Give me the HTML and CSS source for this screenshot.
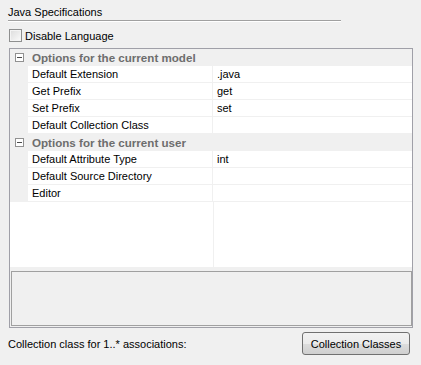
FILE: index.html
```html
<!DOCTYPE html>
<html lang="en">
<head>
    <meta charset="UTF-8">
    <title>Java Specifications</title>
    <link rel="stylesheet" href="styles.css">
</head>
<body>

<div class="panel">
    <div class="section-title">Java Specifications</div>
    <div class="rule"></div>

    <label class="check-row">
        <span class="checkbox"></span>
        <span>Disable Language</span>
    </label>

    <div class="grid-frame">
        <div class="grid">
            <div class="category">
                <span class="toggle"></span>
                <span class="category-name">Options for the current model</span>
            </div>
            <div class="prop"><span class="margin"></span><span class="name">Default Extension</span><span class="value">.java</span></div>
            <div class="prop"><span class="margin"></span><span class="name">Get Prefix</span><span class="value">get</span></div>
            <div class="prop"><span class="margin"></span><span class="name">Set Prefix</span><span class="value">set</span></div>
            <div class="prop"><span class="margin"></span><span class="name">Default Collection Class</span><span class="value"></span></div>
            <div class="category">
                <span class="toggle"></span>
                <span class="category-name">Options for the current user</span>
            </div>
            <div class="prop"><span class="margin"></span><span class="name">Default Attribute Type</span><span class="value">int</span></div>
            <div class="prop"><span class="margin"></span><span class="name">Default Source Directory</span><span class="value"></span></div>
            <div class="prop"><span class="margin"></span><span class="name">Editor</span><span class="value"></span></div>
            <div class="filler"><span class="filler-name"></span><span class="filler-value"></span></div>
        </div>
        <div class="description"></div>
    </div>

    <div class="footer">
        <span class="footer-label">Collection class for 1..* associations:</span>
        <button class="btn">Collection Classes</button>
    </div>
</div>

</body>
</html>
```

FILE: styles.css
```css
body {
    margin: 0;
    background: #f0f0f0;
    color: #000;
    font-family: "Liberation Sans", Arial, sans-serif;
    font-size: 11px;
}
.panel {
    display: flex;
    flex-direction: column;
    width: 421px;
    height: 365px;
}
.section-title {
    margin: 6px 0 0 8px;
    height: 13px;
    line-height: 13px;
}
.rule {
    margin: 1px 0 0 8px;
    width: 333px;
    height: 1px;
    background: #a0a0a0;
    border-bottom: 1px solid #fff;
}
/* Checkbox */
.check-row {
    display: flex;
    align-items: center;
    gap: 3px;
    margin: 7px 0 0 9px;
    height: 13px;
}
.checkbox {
    box-sizing: border-box;
    width: 13px;
    height: 13px;
    border: 1px solid #8e8f8f;
    background: linear-gradient(135deg, #dcdcdc, #fbfbfb);
    box-shadow: inset 0 0 0 1px #f4f4f4;
}
/* Property grid */
.grid-frame {
    box-sizing: border-box;
    margin: 6px 0 0 9px;
    width: 404px;
    height: 280px;
    border: 1px solid #a0a0a8;
    padding: 0 0 1px 0;
    display: flex;
    flex-direction: column;
}
.grid {
    display: flex;
    flex-direction: column;
    height: 218px;
    background: #fff;
}
.category {
    display: flex;
    align-items: center;
    height: 17px;
    background: #f0f0f0;
}
.toggle {
    box-sizing: border-box;
    position: relative;
    width: 9px;
    height: 9px;
    margin: 0 8px 0 5px;
    border: 1px solid #919191;
    background: #fff;
}
.toggle::after {
    content: "";
    position: absolute;
    left: 1px;
    top: 3px;
    width: 5px;
    height: 1px;
    background: #4b4b4b;
}
.category-name {
    font-weight: bold;
    font-size: 11.6px;
    color: #6d6d6d;
}
.prop {
    display: flex;
    height: 17px;
}
.margin {
    width: 18px;
    background: #f0f0f0;
}
.name {
    box-sizing: border-box;
    width: 185px;
    padding-left: 4px;
    line-height: 16px;
    border-bottom: 1px solid #f0f0f0;
    border-right: 1px solid #f0f0f0;
}
.value {
    flex: 1;
    padding-left: 4px;
    line-height: 16px;
    border-bottom: 1px solid #f0f0f0;
}
.filler {
    flex: 1;
    display: flex;
}
.filler-name {
    width: 203px;
    border-right: 1px solid #f0f0f0;
}
.description {
    margin: 4px 0 0 1px;
    flex: 1;
    border: 1px solid #a0a0a0;
    background: #f0f0f0;
}
/* Footer */
.footer {
    display: flex;
    align-items: center;
    justify-content: space-between;
    margin: 4px 11px 0 8px;
    height: 23px;
}
.btn {
    box-sizing: border-box;
    width: 108px;
    height: 23px;
    border: 1px solid #707070;
    border-radius: 3px;
    background: linear-gradient(#f2f2f2 0%, #ebebeb 50%, #dddddd 51%, #cfcfcf 100%);
    font-family: "Liberation Sans", Arial, sans-serif;
    font-size: 11px;
    color: #000;
    padding: 0;
}
```
